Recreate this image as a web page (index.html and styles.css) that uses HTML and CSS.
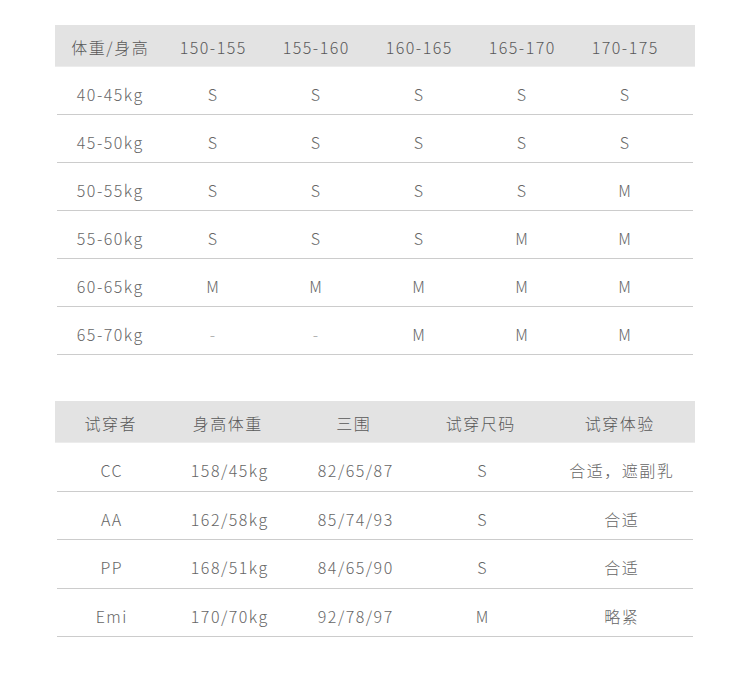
FILE: index.html
```html
<!DOCTYPE html>
<html lang="zh-CN">
<head>
<meta charset="utf-8">
<title>尺码表</title>
<link rel="stylesheet" href="styles.css">
</head>
<body>
<div class="page">
  <div class="table size-table">
    <div class="head">
      <div class="cell">体重/身高</div>
      <div class="cell">150-155</div>
      <div class="cell">155-160</div>
      <div class="cell">160-165</div>
      <div class="cell">165-170</div>
      <div class="cell">170-175</div>
    </div>
    <div class="row">
      <div class="cell">40-45kg</div><div class="cell">S</div><div class="cell">S</div><div class="cell">S</div><div class="cell">S</div><div class="cell">S</div>
    </div>
    <div class="row">
      <div class="cell">45-50kg</div><div class="cell">S</div><div class="cell">S</div><div class="cell">S</div><div class="cell">S</div><div class="cell">S</div>
    </div>
    <div class="row">
      <div class="cell">50-55kg</div><div class="cell">S</div><div class="cell">S</div><div class="cell">S</div><div class="cell">S</div><div class="cell">M</div>
    </div>
    <div class="row">
      <div class="cell">55-60kg</div><div class="cell">S</div><div class="cell">S</div><div class="cell">S</div><div class="cell">M</div><div class="cell">M</div>
    </div>
    <div class="row">
      <div class="cell">60-65kg</div><div class="cell">M</div><div class="cell">M</div><div class="cell">M</div><div class="cell">M</div><div class="cell">M</div>
    </div>
    <div class="row">
      <div class="cell">65-70kg</div><div class="cell dash">-</div><div class="cell dash">-</div><div class="cell">M</div><div class="cell">M</div><div class="cell">M</div>
    </div>
  </div>

  <div class="table try-table">
    <div class="head">
      <div class="cell">试穿者</div>
      <div class="cell">身高体重</div>
      <div class="cell">三围</div>
      <div class="cell">试穿尺码</div>
      <div class="cell">试穿体验</div>
    </div>
    <div class="row">
      <div class="cell">CC</div><div class="cell">158/45kg</div><div class="cell">82/65/87</div><div class="cell">S</div><div class="cell">合适，遮副乳</div>
    </div>
    <div class="row">
      <div class="cell">AA</div><div class="cell">162/58kg</div><div class="cell">85/74/93</div><div class="cell">S</div><div class="cell">合适</div>
    </div>
    <div class="row">
      <div class="cell">PP</div><div class="cell">168/51kg</div><div class="cell">84/65/90</div><div class="cell">S</div><div class="cell">合适</div>
    </div>
    <div class="row">
      <div class="cell">Emi</div><div class="cell">170/70kg</div><div class="cell">92/78/97</div><div class="cell">M</div><div class="cell">略紧</div>
    </div>
  </div>
</div>
</body>
</html>
```

FILE: styles.css
```css
html, body {
  margin: 0;
  padding: 0;
  background: #ffffff;
}

.page {
  width: 751px;
  padding-top: 25px;
  padding-left: 55px;
  box-sizing: border-box;
  font-family: "Noto Sans CJK SC", "Noto Sans", sans-serif;
  font-weight: 300;
  font-size: 16px;
  line-height: 20px;
  color: #666666;
  letter-spacing: 1.5px;
}

.table {
  width: 640px;
  display: flex;
  flex-direction: column;
}

.try-table {
  margin-top: 46px;
}

.head,
.row {
  display: grid;
}

.size-table .head,
.size-table .row {
  grid-template-columns: repeat(6, 103px);
  padding-left: 3px;
}

.try-table .head,
.try-table .row {
  grid-template-columns: 110px 124px 128px 126px 152px;
}

.head {
  background: #e3e3e3;
  color: #595959;
  height: 42px;
  box-sizing: border-box;
  padding-top: 12px;
  border-bottom: 1px solid #ececec;
}

.row {
  height: 48px;
  box-sizing: border-box;
  padding-top: 17px;
  margin: 0 2px;
  border-bottom: 1px solid #cccccc;
}

.size-table .row {
  padding-left: 1px;
}

.try-table .row {
  height: 48.5px;
  margin: 0 2px;
}

.try-table .row .cell:first-child {
  margin-left: -2px;
}

.cell {
  text-align: center;
  white-space: nowrap;
  padding-left: 1.5px;
}

.dash {
  color: #a8a8a8;
}
```
